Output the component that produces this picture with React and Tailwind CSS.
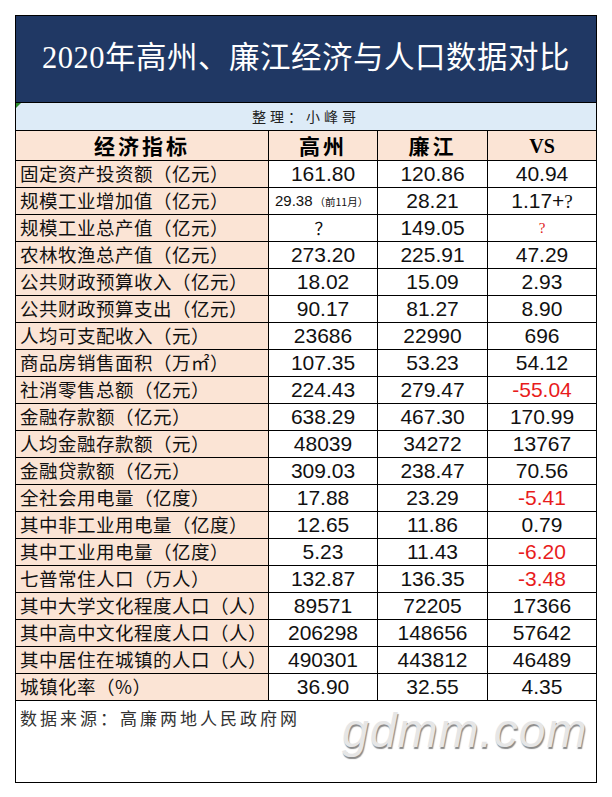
import React from "react"

const rows = [
  ["固定资产投资额（亿元）", "161.80", "120.86", "40.94"],
  ["规模工业增加值（亿元）", "small", "28.21", "1.17+?"],
  ["规模工业总产值（亿元）", "？", "149.05", "red?"],
  ["农林牧渔总产值（亿元）", "273.20", "225.91", "47.29"],
  ["公共财政预算收入（亿元）", "18.02", "15.09", "2.93"],
  ["公共财政预算支出（亿元）", "90.17", "81.27", "8.90"],
  ["人均可支配收入（元）", "23686", "22990", "696"],
  ["商品房销售面积（万㎡）", "107.35", "53.23", "54.12"],
  ["社消零售总额（亿元）", "224.43", "279.47", "-55.04"],
  ["金融存款额（亿元）", "638.29", "467.30", "170.99"],
  ["人均金融存款额（元）", "48039", "34272", "13767"],
  ["金融贷款额（亿元）", "309.03", "238.47", "70.56"],
  ["全社会用电量（亿度）", "17.88", "23.29", "-5.41"],
  ["其中非工业用电量（亿度）", "12.65", "11.86", "0.79"],
  ["其中工业用电量（亿度）", "5.23", "11.43", "-6.20"],
  ["七普常住人口（万人）", "132.87", "136.35", "-3.48"],
  ["其中大学文化程度人口（人）", "89571", "72205", "17366"],
  ["其中高中文化程度人口（人）", "206298", "148656", "57642"],
  ["其中居住在城镇的人口（人）", "490301", "443812", "46489"],
  ["城镇化率（%）", "36.90", "32.55", "4.35"],
]

function Value({ v }) {
  if (v === "small") {
    return (
      <span className="flex items-baseline justify-start w-full pl-[6px]">
        <span className="text-[15px]">29.38</span>
        <span className="text-[10.5px] ml-[2px] font-['Noto_Sans_CJK_SC',sans-serif]">（前11月）</span>
      </span>
    )
  }
  if (v === "red?") {
    return <span className="text-[15px] text-[#e02020] font-['Liberation_Serif',serif]">?</span>
  }
  if (v === "？") {
    return <span className="text-[17px] font-['Noto_Sans_CJK_SC',sans-serif]">？</span>
  }
  if (v === "1.17+?") {
    return (
      <span>
        1.17+<span className="font-['Liberation_Serif',serif] text-[19px]">?</span>
      </span>
    )
  }
  const neg = v.startsWith("-")
  return <span className={neg ? "text-[#e81c1c]" : ""}>{v}</span>
}

export default function App() {
  return (
    <div className="w-[612px] h-[797px] bg-white pt-[15px] pl-[15px]">
      <div className="w-[582px] border border-black">
        <div className="h-[86px] bg-[#203864] flex items-center justify-center text-white text-[30.5px] font-['Liberation_Serif','Noto_Sans_CJK_SC',serif] tracking-[0.5px]">
          2020年高州、廉江经济与人口数据对比
        </div>
        <div className="relative h-[28px] bg-[#ddebf7] border-t border-black flex items-center justify-center text-[14px] text-[#222] tracking-[4px] font-['Noto_Sans_CJK_SC',serif]">
          <span className="absolute left-0 top-0 w-0 h-0 border-t-[5px] border-r-[5px] border-t-[#2e8b2e] border-r-transparent"></span>
          整理：小峰哥
        </div>
        <div className="grid grid-cols-[253px_109px_110px_108px] border-t border-black font-['Liberation_Sans','Noto_Sans_CJK_SC',sans-serif] text-black">
          <div className="h-[30px] bg-[#fbe4d5] border-r border-b border-black flex items-center justify-center text-[21px] font-bold tracking-[3px] font-['Noto_Sans_CJK_SC',serif]">
            经济指标
          </div>
          <div className="h-[30px] bg-[#fbe4d5] border-r border-b border-black flex items-center justify-center text-[21px] font-bold tracking-[3px] font-['Noto_Sans_CJK_SC',serif]">
            高州
          </div>
          <div className="h-[30px] bg-[#fbe4d5] border-r border-b border-black flex items-center justify-center text-[21px] font-bold tracking-[3px] font-['Noto_Sans_CJK_SC',serif]">
            廉江
          </div>
          <div className="h-[30px] bg-[#fbe4d5] border-b border-black flex items-center justify-center text-[20px] font-bold font-['Liberation_Serif',serif]">
            VS
          </div>
          {rows.map((r, i) => (
            <React.Fragment key={i}>
              <div className="h-[27px] bg-[#fbe4d5] border-r border-b border-black flex items-center pl-[4px] text-[18.5px] tracking-[0.5px] text-[#111] whitespace-nowrap font-['Noto_Sans_CJK_SC',sans-serif]">
                {r[0]}
              </div>
              <div className="h-[27px] border-r border-b border-black flex items-center justify-center text-[21px] text-[#111]">
                <Value v={r[1]} />
              </div>
              <div className="h-[27px] border-r border-b border-black flex items-center justify-center text-[21px] text-[#111]">
                <Value v={r[2]} />
              </div>
              <div className="h-[27px] border-b border-black flex items-center justify-center text-[21px] text-[#111]">
                <Value v={r[3]} />
              </div>
            </React.Fragment>
          ))}
        </div>
        <div className="relative h-[81px] bg-white">
          <div className="pt-[4px] pl-[4px] text-[17px] text-[#333] tracking-[3px] font-['Noto_Sans_CJK_SC',sans-serif]">
            数据来源：高廉两地人民政府网
          </div>
          <div className="absolute left-[326px] top-[-6px] text-[48px] italic text-[#e6e6e6] font-['Liberation_Sans',sans-serif] [text-shadow:1px_2px_1px_#8a8a8a] tracking-[1px]">
            gdmm.com
          </div>
        </div>
      </div>
    </div>
  )
}
